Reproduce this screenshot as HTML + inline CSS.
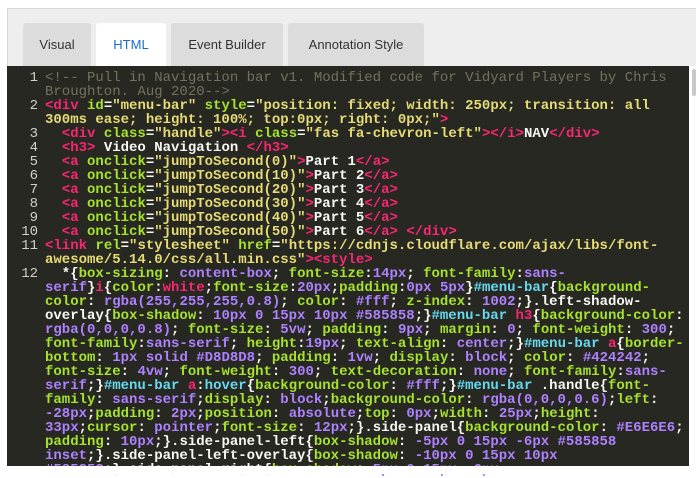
<!DOCTYPE html>
<html><head><meta charset="utf-8"><style>
body{margin:0;width:696px;height:474px;overflow:hidden;background:#fff;font-family:"Liberation Sans",sans-serif;position:relative}
.outer{position:absolute;left:7px;top:8px;width:689px;height:466px;background:#eeeeee;border-top:1px solid #d8d8d8;border-left:1px solid #d8d8d8;box-sizing:border-box}
.tab{position:absolute;top:23px;height:43px;background:#dcdcdc;border-radius:3px 3px 0 0;font-size:13px;color:#333;line-height:43px;text-align:center}
.tab.act{background:#fff;color:#1a6fc4}
.code{position:absolute;left:7px;top:66px;width:682px;height:400px;background:#272822;overflow:hidden}
.sb{position:absolute;left:689px;top:66px;width:7px;height:400px;background:#fff}
.thumb{position:absolute;left:692px;top:69px;width:4px;height:27px;background:#c8c8c8;border-radius:2px}
pre{margin:0;position:absolute;top:71px;left:0;font-family:"Liberation Mono",monospace;font-size:14px;line-height:14px;font-weight:bold;color:#f8f8f2;white-space:pre}
.g{position:absolute;left:14px;width:24px;text-align:right;color:#d0d0c8;font-weight:normal}
.t1{position:absolute;left:45px}
.c{color:#75715e;font-weight:normal}.t{color:#f92672}.a{color:#a6e22e}.s{color:#e6db74}.v{color:#ae81ff}.k{color:#66d9ef}
</style></head><body>
<div class="outer"></div>
<div class="tab" style="left:23px;width:68px">Visual</div>
<div class="tab act" style="left:96px;width:70px">HTML</div>
<div class="tab" style="left:171px;width:112px">Event Builder</div>
<div class="tab" style="left:288px;width:136px">Annotation Style</div>
<div class="code"></div>
<div class="sb"></div><div class="thumb"></div>
<pre class="g">1

2

3
4
5
6
7
8
9
10
11

12</pre>
<pre class="t1"><span class="c">&lt;!-- Pull in Navigation bar v1. Modified code for Vidyard Players by Chris
Broughton. Aug 2020--&gt;</span>
<span class="t">&lt;div</span> <span class="a">id</span>=<span class="s">"menu-bar"</span> <span class="a">style</span>=<span class="s">"position: fixed; width: 250px; transition: all
300ms ease; height: 100%; top:0px; right: 0px;"</span><span class="t">&gt;</span>
  <span class="t">&lt;div</span> <span class="a">class</span>=<span class="s">"handle"</span><span class="t">&gt;&lt;i</span> <span class="a">class</span>=<span class="s">"fas fa-chevron-left"</span><span class="t">&gt;&lt;/i&gt;</span>NAV<span class="t">&lt;/div&gt;</span>
  <span class="t">&lt;h3&gt;</span> Video Navigation <span class="t">&lt;/h3&gt;</span>
  <span class="t">&lt;a</span> <span class="a">onclick</span>=<span class="s">"jumpToSecond(0)"</span><span class="t">&gt;</span>Part 1<span class="t">&lt;/a&gt;</span>
  <span class="t">&lt;a</span> <span class="a">onclick</span>=<span class="s">"jumpToSecond(10)"</span><span class="t">&gt;</span>Part 2<span class="t">&lt;/a&gt;</span>
  <span class="t">&lt;a</span> <span class="a">onclick</span>=<span class="s">"jumpToSecond(20)"</span><span class="t">&gt;</span>Part 3<span class="t">&lt;/a&gt;</span>
  <span class="t">&lt;a</span> <span class="a">onclick</span>=<span class="s">"jumpToSecond(30)"</span><span class="t">&gt;</span>Part 4<span class="t">&lt;/a&gt;</span>
  <span class="t">&lt;a</span> <span class="a">onclick</span>=<span class="s">"jumpToSecond(40)"</span><span class="t">&gt;</span>Part 5<span class="t">&lt;/a&gt;</span>
  <span class="t">&lt;a</span> <span class="a">onclick</span>=<span class="s">"jumpToSecond(50)"</span><span class="t">&gt;</span>Part 6<span class="t">&lt;/a&gt;</span> <span class="t">&lt;/div&gt;</span>
<span class="t">&lt;link</span> <span class="a">rel</span>=<span class="s">"stylesheet"</span> <span class="a">href</span>=<span class="s">"https://cdnjs.cloudflare.com/ajax/libs/font-
awesome/5.14.0/css/all.min.css"</span><span class="t">&gt;&lt;style&gt;</span>
  *{<span class="a">box-sizing</span>: <span class="v">content-box</span>; <span class="a">font-size</span>:<span class="v">14px</span>; <span class="a">font-family</span>:<span class="v">sans-
serif</span>}<span class="t">i</span>{<span class="a">color</span>:<span class="t">white</span>;<span class="a">font-size</span>:<span class="v">20px</span>;<span class="a">padding</span>:<span class="v">0px 5px</span>}<span class="k">#menu-bar</span>{<span class="a">background-
color</span>: <span class="v">rgba(255,255,255,0.8)</span>; <span class="a">color</span>: <span class="v">#fff</span>; <span class="a">z-index</span>: <span class="v">1002</span>;}.left-shadow-
overlay{<span class="a">box-shadow</span>: <span class="v">10px 0 15px 10px #585858</span>;}<span class="k">#menu-bar</span> <span class="t">h3</span>{<span class="a">background-color</span>:
<span class="v">rgba(0,0,0,0.8)</span>; <span class="a">font-size</span>: <span class="v">5vw</span>; <span class="a">padding</span>: <span class="v">9px</span>; <span class="a">margin</span>: <span class="v">0</span>; <span class="a">font-weight</span>: <span class="v">300</span>;
<span class="a">font-family</span>:<span class="v">sans-serif</span>; <span class="a">height</span>:<span class="v">19px</span>; <span class="a">text-align</span>: <span class="v">center</span>;}<span class="k">#menu-bar</span> <span class="t">a</span>{<span class="a">border-
bottom</span>: <span class="v">1px solid #D8D8D8</span>; <span class="a">padding</span>: <span class="v">1vw</span>; <span class="a">display</span>: <span class="v">block</span>; <span class="a">color</span>: <span class="v">#424242</span>;
<span class="a">font-size</span>: <span class="v">4vw</span>; <span class="a">font-weight</span>: <span class="v">300</span>; <span class="a">text-decoration</span>: <span class="v">none</span>; <span class="a">font-family</span>:<span class="v">sans-
serif</span>;}<span class="k">#menu-bar</span> <span class="t">a</span>:<span class="k">hover</span>{<span class="a">background-color</span>: <span class="v">#fff</span>;}<span class="k">#menu-bar</span> .handle{<span class="a">font-
family</span>: <span class="v">sans-serif</span>;<span class="a">display</span>: <span class="v">block</span>;<span class="a">background-color</span>: <span class="v">rgba(0,0,0,0.6)</span>;<span class="a">left</span>:
<span class="v">-28px</span>;<span class="a">padding</span>: <span class="v">2px</span>;<span class="a">position</span>: <span class="v">absolute</span>;<span class="a">top</span>: <span class="v">0px</span>;<span class="a">width</span>: <span class="v">25px</span>;<span class="a">height</span>:
<span class="v">33px</span>;<span class="a">cursor</span>: <span class="v">pointer</span>;<span class="a">font-size</span>: <span class="v">12px</span>;}.side-panel{<span class="a">background-color</span>: <span class="v">#E6E6E6</span>;
<span class="a">padding</span>: <span class="v">10px</span>;}.side-panel-left{<span class="a">box-shadow</span>: <span class="v">-5px 0 15px -6px #585858</span>
<span class="v">inset</span>;}.side-panel-left-overlay{<span class="a">box-shadow</span>: <span class="v">-10px 0 15px 10px</span>
<span class="v">#585858</span>;}.side-panel-right{<span class="a">box-shadow</span>: <span class="v">5px 0 15px -6px</span></pre>
<div style="position:absolute;left:0;top:466px;width:696px;height:8px;background:#fff"></div>
</body></html>
